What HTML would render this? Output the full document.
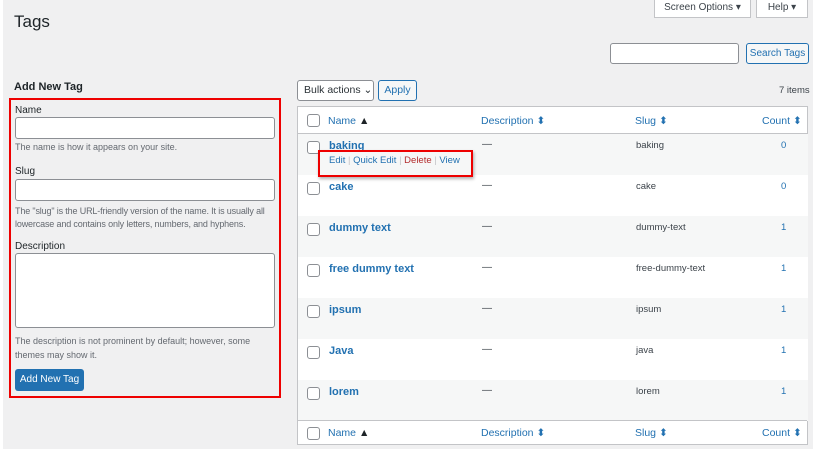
<!DOCTYPE html><html><head><style>
body{margin:0;width:813px;height:449px;background:#f0f0f1;font-family:"Liberation Sans",sans-serif;font-size:10px;color:#3c434a;position:relative;overflow:hidden}
.a{position:absolute}
.btn{position:absolute;border:1px solid #2271b1;color:#2271b1;background:#f6f7f7;border-radius:3px;font-size:10px;text-align:center;box-sizing:border-box}
.inp{position:absolute;background:#fff;border:1px solid #8c8f94;border-radius:3px;box-sizing:border-box}
.cb{position:absolute;left:9px;width:11px;height:11px;border:1px solid #8c8f94;border-radius:3px;background:#fff}
.row{position:absolute;left:0;width:510px;height:41px}
.row b{position:absolute;left:31px;top:6px;color:#2271b1;font-size:11px}
.row .d{position:absolute;left:184px;top:5px}
.row .s{position:absolute;left:338px;top:6px;font-size:9.5px}
.row .c{position:absolute;left:483px;top:6px;color:#2271b1;font-size:9.5px}
.hd span{position:absolute;top:8px;color:#2271b1;font-size:10.5px}
.ar{color:#a7aaad;font-size:8px}
.hint{color:#646970;font-size:9px}
</style></head><body>
<div class="a" style="left:0;top:0;width:3px;height:449px;background:#fff"></div>
<div class="a" style="left:14px;top:12px;font-size:17px;color:#1d2327">Tags</div>
<div class="a" style="left:654px;top:0;width:97px;height:18px;background:#fff;border:1px solid #c3c4c7;border-top:0;box-sizing:border-box;text-align:center;line-height:15px;font-size:10px">Screen Options ▾</div>
<div class="a" style="left:756px;top:0;width:52px;height:18px;background:#fff;border:1px solid #c3c4c7;border-top:0;box-sizing:border-box;text-align:center;line-height:15px;font-size:10px">Help ▾</div>
<div class="inp" style="left:610px;top:43px;width:129px;height:21px"></div>
<div class="btn" style="left:746px;top:43px;width:63px;height:21px;line-height:20px">Search Tags</div>
<div class="a" style="left:14px;top:81px;font-size:11px;font-weight:bold;color:#1d2327">Add New Tag</div>
<div class="a" style="left:9px;top:98px;width:268px;height:296px;border:2px solid #e00"></div>
<div class="a" style="left:15px;top:105px;color:#1d2327">Name</div>
<div class="inp" style="left:15px;top:117px;width:260px;height:22px"></div>
<div class="a hint" style="left:15px;top:142px">The name is how it appears on your site.</div>
<div class="a" style="left:15px;top:166px;color:#1d2327">Slug</div>
<div class="inp" style="left:15px;top:179px;width:260px;height:22px"></div>
<div class="a hint" style="left:15px;top:205px;width:262px;line-height:13px;letter-spacing:-0.15px">The "slug" is the URL-friendly version of the name. It is usually all lowercase and contains only letters, numbers, and hyphens.</div>
<div class="a" style="left:15px;top:241px;color:#1d2327">Description</div>
<div class="inp" style="left:15px;top:253px;width:260px;height:75px"></div>
<div class="a hint" style="left:15px;top:334px;width:262px;line-height:14px">The description is not prominent by default; however, some themes may show it.</div>
<div class="a" style="left:15px;top:369px;width:69px;height:22px;background:#2271b1;color:#fff;border-radius:3px;text-align:center;line-height:22px">Add New Tag</div>
<div class="a" style="left:297px;top:80px;width:77px;height:21px;background:#fff;border:1px solid #8c8f94;border-radius:3px;box-sizing:border-box;line-height:19px;padding-left:6px;font-size:10.5px;color:#2c3338">Bulk actions ⌄</div>
<div class="btn" style="left:378px;top:80px;width:39px;height:21px;line-height:19px;font-size:10.5px">Apply</div>
<div class="a" style="left:779px;top:85px;font-size:9.5px">7 items</div>
<div class="a" style="left:297px;top:106px;width:511px;height:339px;border:1px solid #c3c4c7;background:#fff;box-sizing:border-box">
<div class="hd a" style="left:0;top:0;width:509px;height:26px;border-bottom:1px solid #c3c4c7">
<div class="cb" style="top:7px"></div>
<span style="left:30px">Name <span class="ar" style="position:static;color:#1d2327">▲</span></span>
<span style="left:183px">Description <span class="ar" style="position:static">⬍</span></span>
<span style="left:337px">Slug <span class="ar" style="position:static">⬍</span></span>
<span style="left:464px">Count <span class="ar" style="position:static">⬍</span></span>
</div>
<div class="row" style="top:27px;background:#f6f7f7"><div class="cb" style="top:7px"></div><b>baking</b><span class="d">—</span><span class="s">baking</span><span class="c">0</span>
<div class="a" style="left:31px;top:21px;font-size:9.5px;color:#2271b1">Edit <span style="color:#c3c4c7">|</span> Quick Edit <span style="color:#c3c4c7">|</span> <span style="color:#b32d2e">Delete</span> <span style="color:#c3c4c7">|</span> View</div></div>
<div class="row" style="top:68px;background:#fff"><div class="cb" style="top:7px"></div><b>cake</b><span class="d">—</span><span class="s">cake</span><span class="c">0</span></div>
<div class="row" style="top:109px;background:#f6f7f7"><div class="cb" style="top:7px"></div><b>dummy text</b><span class="d">—</span><span class="s">dummy-text</span><span class="c">1</span></div>
<div class="row" style="top:150px;background:#fff"><div class="cb" style="top:7px"></div><b>free dummy text</b><span class="d">—</span><span class="s">free-dummy-text</span><span class="c">1</span></div>
<div class="row" style="top:191px;background:#f6f7f7"><div class="cb" style="top:7px"></div><b>ipsum</b><span class="d">—</span><span class="s">ipsum</span><span class="c">1</span></div>
<div class="row" style="top:232px;background:#fff"><div class="cb" style="top:7px"></div><b>Java</b><span class="d">—</span><span class="s">java</span><span class="c">1</span></div>
<div class="row" style="top:273px;background:#f6f7f7"><div class="cb" style="top:7px"></div><b>lorem</b><span class="d">—</span><span class="s">lorem</span><span class="c">1</span></div>
<div class="hd a" style="left:0;top:313px;width:509px;height:24px;border-top:1px solid #c3c4c7">
<div class="cb" style="top:6px"></div>
<span style="left:30px;top:6px">Name <span class="ar" style="position:static;color:#1d2327">▲</span></span>
<span style="left:183px;top:6px">Description <span class="ar" style="position:static">⬍</span></span>
<span style="left:337px;top:6px">Slug <span class="ar" style="position:static">⬍</span></span>
<span style="left:464px;top:6px">Count <span class="ar" style="position:static">⬍</span></span>
</div>
</div>
<div class="a" style="left:318px;top:150px;width:151px;height:23px;border:2px solid #e00;box-shadow:1px 2px 3px rgba(0,0,0,.3)"></div>
</body></html>
